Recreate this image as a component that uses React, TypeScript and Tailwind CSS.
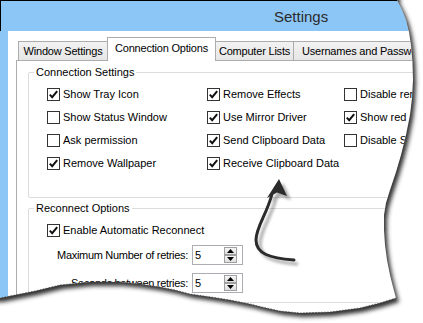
import React from 'react';

// torn-paper outline, page coordinates
const EDGE: [number, number][] = [
  [397, 0], [402, 10], [406, 20], [409, 32], [411, 45], [412.5, 62], [413, 80], [412, 98],
  [410, 115], [406, 135], [401, 155], [396, 172], [390, 190], [386, 203], [384, 215],
  [384, 230], [385, 245], [387, 260], [390, 275], [393, 287], [396, 298],
  [380, 303], [360, 308], [330, 312], [300, 313], [280, 311], [262, 307], [250, 304],
  [230, 300], [211, 297], [190, 294], [175, 290], [160, 287], [140, 284], [120, 282],
  [90, 282], [60, 285], [35, 291], [10, 296], [0, 298],
];

const PAPER =
  'M-10 -10 L397 -10 ' + EDGE.map(([x, y]) => `L${x} ${y}`).join(' ') + ' L-10 298 Z';
const OUTSIDE = 'M-20 -20 H440 V340 H-20 Z ' + PAPER;
const TEAR_LINE = 'M' + EDGE.slice(20).map(([x, y]) => `${x} ${y}`).join(' L');

function Check({ checked }: { checked?: boolean }) {
  return (
    <svg width="13" height="13" viewBox="0 0 13 13" className="shrink-0">
      <rect x="0.5" y="0.5" width="12" height="12" fill="#fff" stroke="#333" />
      {checked && (
        <path d="M2.8 6.6 L5.2 9.2 L10.2 3.2" fill="none" stroke="#111" strokeWidth="2" />
      )}
    </svg>
  );
}

function CheckRow({ label, checked }: { label: string; checked?: boolean }) {
  return (
    <div className="flex items-center h-[23px] gap-[3px] whitespace-nowrap">
      <Check checked={checked} />
      <span>{label}</span>
    </div>
  );
}

function SpinButton({ up }: { up?: boolean }) {
  return (
    <div className="flex items-center justify-center w-[13px] h-[8px] border border-[#a0a0a0] bg-gradient-to-b from-[#f6f6f6] to-[#dedede]">
      <svg width="7" height="4" viewBox="0 0 7 4">
        <path d={up ? 'M0 4 L3.5 0 L7 4 Z' : 'M0 0 L3.5 4 L7 0 Z'} fill="#000" />
      </svg>
    </div>
  );
}

function SpinRow({ label, value }: { label: string; value: string }) {
  return (
    <div className="flex items-center h-[20px]">
      <div className="w-[159px] text-right whitespace-nowrap tracking-[-0.3px]">{label}</div>
      <div className="ml-[4px] flex items-center h-[20px] w-[51px] border border-[#abadb3] bg-white">
        <span className="flex-1 pl-[2px]">{value}</span>
        <div className="flex flex-col mr-[5px]">
          <SpinButton up />
          <SpinButton />
        </div>
      </div>
    </div>
  );
}

function Group({ title, className, children }: { title: string; className: string; children: React.ReactNode }) {
  return (
    <div className={`relative w-[420px] border border-[#dcdcdc] rounded-[2px] ${className}`}>
      <span className="absolute -top-[8px] left-[5px] bg-white px-[2px] leading-[14px]">{title}</span>
      {children}
    </div>
  );
}

export default function App() {
  return (
    <div className="relative w-[423px] h-[323px] overflow-hidden bg-white text-[11px] text-black font-['Liberation_Sans',Arial,sans-serif]">
      <div className="w-[440px] flex flex-col">
        {/* title bar */}
        <div className="h-[31px] bg-[#8bc6f7] border-t border-l border-black flex items-center">
          <span className="ml-[273px] text-[15px] text-[#2b2b2b] leading-none">Settings</span>
        </div>

        <div className="flex">
          <div className="w-[8px] bg-[#8bc6f7] shrink-0" />
          <div className="flex-1 bg-white pt-[6px]">
            {/* tabs */}
            <div className="flex items-end ml-[10px] h-[23px] tracking-[-0.2px]">
              <div className="w-[90px] h-[19px] flex items-center justify-center border border-b-0 border-[#acacac] bg-gradient-to-b from-[#f2f2f2] to-[#e6e6e6] whitespace-nowrap">
                Window Settings
              </div>
              <div className="relative z-10 -ml-px -mb-px w-[109px] h-[24px] flex items-center justify-center pb-[2px] border border-b-0 border-[#acacac] bg-white whitespace-nowrap">
                Connection Options
              </div>
              <div className="w-[78px] h-[19px] flex items-center justify-center border border-b-0 border-l-0 border-[#acacac] bg-gradient-to-b from-[#f2f2f2] to-[#e6e6e6] whitespace-nowrap">
                Computer Lists
              </div>
              <div className="w-[140px] h-[19px] flex items-center pl-[8px] border border-b-0 border-l-0 border-[#acacac] bg-gradient-to-b from-[#f2f2f2] to-[#e6e6e6] whitespace-nowrap">
                Usernames and Passwords
              </div>
            </div>

            {/* tab panel */}
            <div className="ml-[8px] border-t border-l border-[#acacac] bg-white pl-[11px] pt-[11px] h-[260px]">
              <Group title="Connection Settings" className="h-[126px]">
                <div className="grid grid-cols-[160px_137px_120px] pl-[18px] pt-[10px]">
                  <div>
                    <CheckRow label="Show Tray Icon" checked />
                    <CheckRow label="Show Status Window" />
                    <CheckRow label="Ask permission" />
                    <CheckRow label="Remove Wallpaper" checked />
                  </div>
                  <div>
                    <CheckRow label="Remove Effects" checked />
                    <CheckRow label="Use Mirror Driver" checked />
                    <CheckRow label="Send Clipboard Data" checked />
                    <CheckRow label="Receive Clipboard Data" checked />
                  </div>
                  <div>
                    <CheckRow label="Disable remote input" />
                    <CheckRow label="Show red border" checked />
                    <CheckRow label="Disable Sounds" />
                  </div>
                </div>
              </Group>

              <Group title="Reconnect Options" className="mt-[10px] h-[95px]">
                <div className="pl-[18px] pt-[10px]">
                  <CheckRow label="Enable Automatic Reconnect" checked />
                </div>
                <div className="mt-[3px]">
                  <SpinRow label="Maximum Number of retries:" value="5" />
                </div>
                <div className="mt-[8px]">
                  <SpinRow label="Seconds between retries:" value="5" />
                </div>
              </Group>
            </div>
          </div>
        </div>
      </div>

      {/* torn edge, shadow and callout arrow drawn over the screenshot */}
      <svg width="423" height="323" viewBox="0 0 423 323" className="absolute inset-0 pointer-events-none">
        <defs>
          <filter id="soft" x="-20%" y="-20%" width="140%" height="140%">
            <feGaussianBlur stdDeviation="2.2" />
          </filter>
          <filter id="soft2" x="-50%" y="-50%" width="200%" height="200%">
            <feGaussianBlur stdDeviation="1.6" />
          </filter>
          <clipPath id="outside">
            <path d={OUTSIDE} clipRule="evenodd" />
          </clipPath>
        </defs>
        <path d={OUTSIDE} fill="#fff" fillRule="evenodd" />
        <g clipPath="url(#outside)">
          <path d={PAPER} transform="translate(3 4)" fill="#333" filter="url(#soft)" />
        </g>
        <path d={TEAR_LINE} fill="none" stroke="#444" strokeWidth="0.7" strokeDasharray="1.5 1.5" />

        {/* arrow shadow */}
        <g transform="translate(4 4)" opacity="0.35" filter="url(#soft2)">
          <path d="M294 260 C270 258 256 254 256 240 C256 227 267 214 272 194" fill="none" stroke="#000" strokeWidth="3" />
          <path d="M279 179 L287 196 L277 192.5 L267 198 Z" fill="#000" />
        </g>
        <path d="M294 260 C270 258 256 254 256 240 C256 227 267 214 272 194" fill="none" stroke="#2b2b2b" strokeWidth="3" strokeLinecap="round" />
        <path d="M279 179 L287 196 L277 192.5 L267 198 Z" fill="#2b2b2b" />
      </svg>
    </div>
  );
}
